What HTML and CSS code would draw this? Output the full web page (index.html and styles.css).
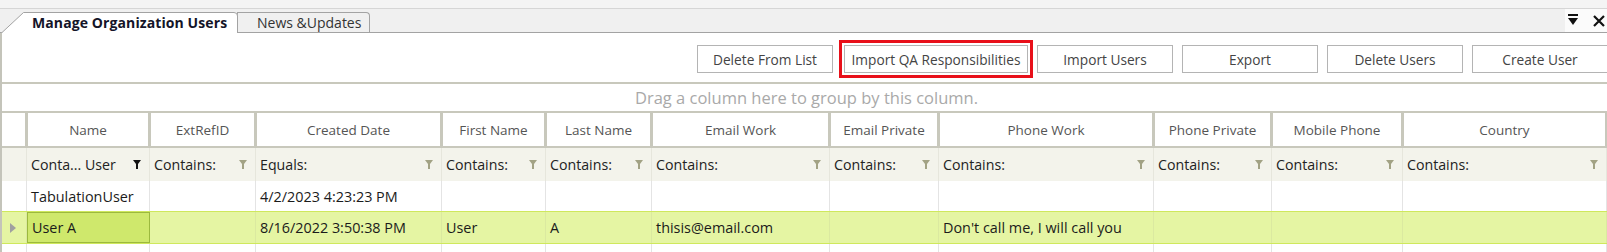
FILE: index.html
```html
<!DOCTYPE html>
<html lang="en">
<head>
<meta charset="utf-8">
<title>Manage Organization Users</title>
<link rel="stylesheet" href="styles.css">
</head>
<body>
<div class="app">
  <div class="topstrip"></div>
  <div class="tabbar">
    <div class="tabs">
      <div class="tab tab-active">
        <svg class="tab-shape" width="240" height="21" viewBox="0 0 240 21"><path d="M1.5 21 L23.5 0.5 H234 Q237.5 0.5 237.5 4 V21" fill="#ffffff" stroke="#a3a3a3" stroke-width="1"/></svg>
        <span class="tab-label">Manage Organization Users</span>
      </div>
      <div class="tab tab-inactive"><span class="tab-label">News &amp;Updates</span></div>
    </div>
    <div class="tab-tools">
      <svg width="11" height="13" viewBox="0 0 11 13"><rect x="0" y="0" width="10" height="2" fill="#111"/><path d="M0 4 H10 L5 11 Z" fill="#111"/></svg>
      <svg width="12" height="12" viewBox="0 0 12 12"><path d="M1 1 L11 11 M11 1 L1 11" stroke="#111" stroke-width="2.2"/></svg>
    </div>
  </div>
  <div class="panel">
    <div class="toolbar">
      <button class="btn">Delete From List</button>
      <button class="btn btn-marked">Import QA Responsibilities</button>
      <button class="btn">Import Users</button>
      <button class="btn">Export</button>
      <button class="btn">Delete Users</button>
      <button class="btn btn-last">Create User</button>
    </div>
    <div class="grouppanel">Drag a column here to group by this column.</div>
    <div class="grid">
      <div class="row header">
        <div class="hcell"></div>
        <div class="hcell">Name</div>
        <div class="hcell">ExtRefID</div>
        <div class="hcell">Created Date</div>
        <div class="hcell">First Name</div>
        <div class="hcell">Last Name</div>
        <div class="hcell">Email Work</div>
        <div class="hcell">Email Private</div>
        <div class="hcell">Phone Work</div>
        <div class="hcell">Phone Private</div>
        <div class="hcell">Mobile Phone</div>
        <div class="hcell">Country</div>
      </div>
      <div class="row filter">
        <div class="fcell"></div>
        <div class="fcell"><span>Conta... User</span><svg class="funnel active" width="8" height="9" viewBox="0 0 8 9"><path d="M0 0 H8 L5 4 V9 H3 V4 Z"/></svg></div>
        <div class="fcell"><span>Contains:</span><svg class="funnel" width="8" height="9" viewBox="0 0 8 9"><path d="M0 0 H8 L5 4 V9 H3 V4 Z"/></svg></div>
        <div class="fcell"><span>Equals:</span><svg class="funnel" width="8" height="9" viewBox="0 0 8 9"><path d="M0 0 H8 L5 4 V9 H3 V4 Z"/></svg></div>
        <div class="fcell"><span>Contains:</span><svg class="funnel" width="8" height="9" viewBox="0 0 8 9"><path d="M0 0 H8 L5 4 V9 H3 V4 Z"/></svg></div>
        <div class="fcell"><span>Contains:</span><svg class="funnel" width="8" height="9" viewBox="0 0 8 9"><path d="M0 0 H8 L5 4 V9 H3 V4 Z"/></svg></div>
        <div class="fcell"><span>Contains:</span><svg class="funnel" width="8" height="9" viewBox="0 0 8 9"><path d="M0 0 H8 L5 4 V9 H3 V4 Z"/></svg></div>
        <div class="fcell"><span>Contains:</span><svg class="funnel" width="8" height="9" viewBox="0 0 8 9"><path d="M0 0 H8 L5 4 V9 H3 V4 Z"/></svg></div>
        <div class="fcell"><span>Contains:</span><svg class="funnel" width="8" height="9" viewBox="0 0 8 9"><path d="M0 0 H8 L5 4 V9 H3 V4 Z"/></svg></div>
        <div class="fcell"><span>Contains:</span><svg class="funnel" width="8" height="9" viewBox="0 0 8 9"><path d="M0 0 H8 L5 4 V9 H3 V4 Z"/></svg></div>
        <div class="fcell"><span>Contains:</span><svg class="funnel" width="8" height="9" viewBox="0 0 8 9"><path d="M0 0 H8 L5 4 V9 H3 V4 Z"/></svg></div>
        <div class="fcell"><span>Contains:</span><svg class="funnel" width="8" height="9" viewBox="0 0 8 9"><path d="M0 0 H8 L5 4 V9 H3 V4 Z"/></svg></div>
      </div>
      <div class="row data">
        <div class="cell ind"></div>
        <div class="cell">TabulationUser</div>
        <div class="cell"></div>
        <div class="cell">4/2/2023 4:23:23 PM</div>
        <div class="cell"></div>
        <div class="cell"></div>
        <div class="cell"></div>
        <div class="cell"></div>
        <div class="cell"></div>
        <div class="cell"></div>
        <div class="cell"></div>
        <div class="cell"></div>
      </div>
      <div class="row data selected">
        <div class="cell ind"><svg width="6" height="10" viewBox="0 0 6 10"><path d="M0 0 L6 5 L0 10 Z" fill="#a0a0a0"/></svg></div>
        <div class="cell focus">User A</div>
        <div class="cell"></div>
        <div class="cell">8/16/2022 3:50:38 PM</div>
        <div class="cell">User</div>
        <div class="cell">A</div>
        <div class="cell">thisis@email.com</div>
        <div class="cell"></div>
        <div class="cell">Don't call me, I will call you</div>
        <div class="cell"></div>
        <div class="cell"></div>
        <div class="cell"></div>
      </div>
      <div class="row data last">
        <div class="cell ind"></div>
        <div class="cell"></div>
        <div class="cell"></div>
        <div class="cell"></div>
        <div class="cell"></div>
        <div class="cell"></div>
        <div class="cell"></div>
        <div class="cell"></div>
        <div class="cell"></div>
        <div class="cell"></div>
        <div class="cell"></div>
        <div class="cell"></div>
      </div>
    </div>
  </div>
</div>
</body>
</html>
```
FILE: styles.css
```css
* { box-sizing: border-box; }
html, body { margin: 0; padding: 0; }
body {
  width: 1607px;
  height: 252px;
  overflow: hidden;
  background: #ffffff;
  font-family: "Open Sans", "Noto Sans", sans-serif;
  font-size: 13.5px;
  color: #1b1b1b;
}
.app { display: flex; flex-direction: column; height: 252px; overflow: hidden; }
.app > *, .panel > *, .grid > * { flex-shrink: 0; }

.topstrip {
  height: 9px;
  background: #f4f4f4;
  border-bottom: 1px solid #d6d6d6;
}
.tabbar {
  height: 24px;
  display: flex;
  justify-content: space-between;
  align-items: flex-end;
  background: #f0f0f0;
  border-bottom: 1px solid #a3a3a3;
}
.tabs { display: flex; align-items: flex-end; height: 100%; }
.tab {
  position: relative;
  display: flex;
  align-items: center;
  margin-bottom: -1px;
}
.tab-active {
  width: 238px;
  height: 21px;
  padding-left: 32px;
  z-index: 2;
}
.tab-shape { position: absolute; left: 0; top: 0; }
.tab-active .tab-label {
  position: relative;
  font-weight: 700;
  font-size: 14px;
  color: #141428;
  letter-spacing: 0.1px;
}
.tab-inactive {
  height: 20px;
  margin-bottom: 0;
  width: 133px;
  margin-left: -1px;
  padding-left: 19px;
  background: #f0f0f0;
  border: 1px solid #a3a3a3;
  border-bottom: none;
  border-top-right-radius: 4px;
  z-index: 1;
}
.tab-inactive .tab-label { font-size: 14px; color: #333; }
.tab-tools {
  width: 42px;
  height: 100%;
  background: #fbfbfb;
  display: flex;
  align-items: center;
  gap: 14px;
  padding-left: 3px;
}

.panel {
  flex: 1;
  display: flex;
  flex-direction: column;
  border-left: 2px solid #c4c4ba;
  min-height: 0;
}
.toolbar {
  height: 49px;
  display: flex;
  justify-content: flex-end;
  align-items: flex-start;
  gap: 9px;
  padding-top: 12px;
  margin-right: -1px;
}
.btn {
  height: 28px;
  width: 136px;
  padding: 0 6px;
  background: #ffffff;
  border: 1px solid #b4b4b4;
  font-family: inherit;
  font-size: 13.7px;
  color: #444;
  white-space: nowrap;
}
.btn-marked {
  width: 184px;
  margin-left: 2px;
  outline: 3px solid #e8101a;
  outline-offset: 2px;
}
.grouppanel {
  height: 30px;
  border-top: 2px solid #c8c8bc;
  border-bottom: 1px solid #c8c8bc;
  display: flex;
  align-items: center;
  justify-content: center;
  font-size: 16.5px;
  color: #a9a9a9;
  padding-left: 4px;
}
.grid { display: flex; flex-direction: column; }
.row {
  display: grid;
  grid-template-columns: 25px 123px 106px 186px 104px 106px 178px 109px 215px 118px 131px 204px;
}
.header {
  height: 36px;
  background: #c8c8bc;
  padding: 1px 0 2px;
}
.hcell {
  background: #ffffff;
  margin: 0 2px 0 1px;
  display: flex;
  align-items: center;
  justify-content: center;
  color: #555;
  white-space: nowrap;
}
.hcell:first-child { margin-left: 0; }
.filter {
  height: 33px;
  background: #f3f3eb;
  font-size: 14.2px;
}
.fcell {
  display: flex;
  align-items: center;
  justify-content: space-between;
  padding: 0 8px 0 4px;
  border-right: 1px solid #e6e6dc;
  color: #222;
  white-space: nowrap;
}
.funnel { fill: #a2a284; flex-shrink: 0; }
.funnel.active { fill: #111; }
.data { height: 30px; font-size: 14.4px; }
.cell {
  display: flex;
  align-items: center;
  padding: 0 4px;
  border-right: 1px solid #e4e4e4;
  white-space: nowrap;
  overflow: hidden;
}
.ind { justify-content: center; padding: 0 2px 0 0; }
.selected {
  height: 33px;
  background: #e5f5a3;
  border-top: 1px solid #cfe85c;
  border-bottom: 1px solid #cfe85c;
}
.selected .cell { border-right-color: #dbe9a0; }
.selected .focus {
  background: #cfe86c;
  border: 1px solid #9cb93e;
}
.last { height: 8px; }
```
